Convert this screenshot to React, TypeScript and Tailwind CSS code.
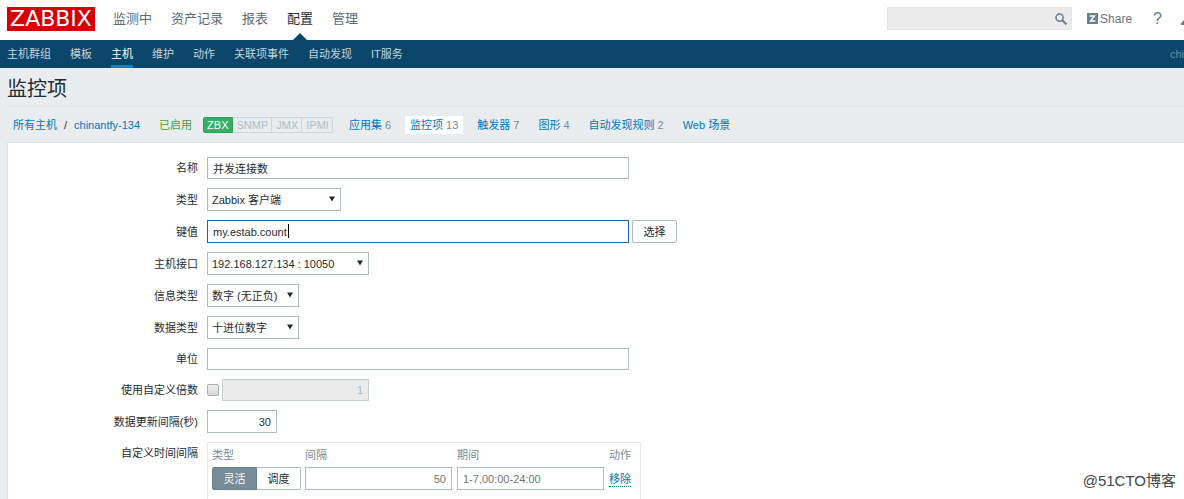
import type { ReactNode } from "react";

const TOP_MENU = ["监测中", "资产记录", "报表", "配置", "管理"];
const SUB_MENU = ["主机群组", "模板", "主机", "维护", "动作", "关联项事件", "自动发现", "IT服务"];
const INTERFACES = ["SNMP", "JMX", "IPMI"];
const HOST_TABS = [
  { name: "应用集", count: "6" },
  { name: "监控项", count: "13" },
  { name: "触发器", count: "7" },
  { name: "图形", count: "4" },
  { name: "自动发现规则", count: "2" },
  { name: "Web 场景", count: "" },
];

function SearchIcon() {
  return (
    <svg className="size-3" viewBox="0 0 12 12" fill="none" stroke="#66808d">
      <circle cx="4.6" cy="4.6" r="3.6" strokeWidth="1.5" />
      <path d="M7.2 7.2 11.4 11.4" strokeWidth="2" />
    </svg>
  );
}

function Header() {
  return (
    <header className="flex h-10 items-center overflow-hidden bg-white pl-[7px]">
      <a
        href="#"
        className="mt-[-2px] flex h-6 w-[88px] items-center justify-center bg-[#d40000] font-['DejaVu_Sans',sans-serif] text-[22px] leading-6 text-white"
      >
        ZABBIX
      </a>
      <nav className="ml-[18px] flex h-10 gap-[19px] text-[13px]">
        {TOP_MENU.map((item) => (
          <a
            key={item}
            href="#"
            className={
              item === "配置"
                ? "relative flex h-[38px] items-center text-[#1f2c33]"
                : "flex h-[38px] items-center text-[#5c6b73]"
            }
          >
            {item}
            {item === "配置" && (
              <svg className="absolute top-[33px] left-[6px] h-[7px] w-[14px]" viewBox="0 0 14 7">
                <path d="M0 7 7 0l7 7z" fill="#0a466a" />
              </svg>
            )}
          </a>
        ))}
      </nav>
      <div className="mt-[-3px] -mr-[9px] ml-auto flex shrink-0 items-center text-[#66757d]">
        <div className="flex h-[23px] w-[185px] items-center border border-[#e2e5e7] bg-[#ebebeb] pr-1">
          <input aria-label="Search" className="h-full min-w-0 flex-1 bg-transparent px-1 outline-none" />
          <button type="button" aria-label="Search">
            <SearchIcon />
          </button>
        </div>
        <a href="#" className="ml-[15px] flex items-center gap-[2px] text-[12px]">
          <svg className="size-[11px]" viewBox="0 0 11 11">
            <path d="M0 0h11v11H0z" fill="#66808d" />
            <path d="M2.6 3h4.8L3.6 8h4.8" fill="none" stroke="#fff" strokeWidth="1.5" />
          </svg>
          Share
        </a>
        <a href="#" className="ml-[21px] text-[16px] leading-5 text-[#5f7a88]">
          ?
        </a>
        <a href="#" aria-label="Profile" className="ml-[19px]">
          <svg className="size-3" viewBox="0 0 12 12" fill="#5f7a88">
            <circle cx="6" cy="3" r="3" />
            <path d="M0 12c0-3 2-5 6-5s6 2 6 5z" />
          </svg>
        </a>
      </div>
    </header>
  );
}

function SubMenu() {
  return (
    <nav className="flex h-7 items-center gap-[19px] bg-[#0a466a] pl-[7px] text-[#c6d3dc]">
      {SUB_MENU.map((item) => (
        <a
          key={item}
          href="#"
          className={
            item === "主机"
              ? "flex h-7 items-center border-b-3 border-[#0f83c9] pt-[3px] text-white"
              : "flex h-7 items-center"
          }
        >
          {item}
        </a>
      ))}
      <span className="ml-auto text-[#6b8ba0]">chi</span>
    </nav>
  );
}

function HostBar() {
  return (
    <div className="flex h-[35px] items-center pl-[6px] text-[#0275b8]">
      <a href="#">所有主机</a>
      <span className="mx-[7px] text-[#1f2c33]">/</span>
      <a href="#">chinantfy-134</a>
      <span className="ml-[19px] text-[#429e47]">已启用</span>
      <span className="ml-[11px] flex h-4 leading-[14px]">
        <span className="rounded-l-xs border border-[#2f9f5e] bg-[#34af67] px-[3px] text-white">ZBX</span>
        {INTERFACES.map((name) => (
          <span
            key={name}
            className="border border-l-0 border-[#ccd5d9] pr-[3px] pl-1 text-[#b0bec5] last:rounded-r-xs"
          >
            {name}
          </span>
        ))}
      </span>
      <div className="ml-[11px] flex gap-[9px]">
        {HOST_TABS.map((tab) => (
          <a
            key={tab.name}
            href="#"
            className={
              tab.name === "监控项"
                ? "flex h-[18px] items-center gap-[3px] bg-white px-[5px]"
                : "flex h-[18px] items-center gap-[3px] px-[5px]"
            }
          >
            {tab.name}
            {tab.count && <span className="text-[#768d99]">{tab.count}</span>}
          </a>
        ))}
      </div>
    </div>
  );
}

function Row({ label, htmlFor, children }: { label: string; htmlFor: string; children: ReactNode }) {
  return (
    <div className="flex items-center gap-[9px]">
      <label htmlFor={htmlFor} className="w-[190px] shrink-0 text-right">
        {label}
      </label>
      <div className="flex items-center gap-[3px]">{children}</div>
    </div>
  );
}

function Select({ id, value, width }: { id: string; value: string; width: string }) {
  return (
    <div className={`relative ${width}`}>
      <select id={id} className="h-[23px] w-full appearance-none border border-[#acbbc2] bg-white pl-1 outline-none">
        <option>{value}</option>
      </select>
      <svg className="pointer-events-none absolute top-2 right-[6px] h-[6px] w-[6px]" viewBox="0 0 7 6">
        <path d="M0 0h7L3.5 6z" fill="#1f2c33" />
      </svg>
    </div>
  );
}

function IntervalTable() {
  return (
    <div className="border border-b-0 border-[#e4e9eb] px-1 pt-1 pr-[9px]">
      <table className="text-[#768d99]">
        <thead>
          <tr className="h-[20px] text-left">
            <th className="pr-1 pb-1 font-normal">类型</th>
            <th className="pr-[5px] pb-1 font-normal">间隔</th>
            <th className="pr-[5px] pb-1 font-normal">期间</th>
            <th className="pb-1 font-normal">动作</th>
          </tr>
        </thead>
        <tbody>
          <tr>
            <td className="pr-1">
              <div className="flex h-[23px]">
                <button type="button" className="w-[45px] rounded-l-xs border border-[#6a818d] bg-[#768d99] text-white">
                  灵活
                </button>
                <button
                  type="button"
                  className="w-11 rounded-r-xs border border-l-0 border-[#acbbc2] bg-white text-[#1f2c33]"
                >
                  调度
                </button>
              </div>
            </td>
            <td className="pr-[5px]">
              <input
                aria-label="间隔"
                placeholder="50"
                className="block h-[23px] w-[147px] border border-[#acbbc2] px-[5px] text-right placeholder:text-[#757575]"
              />
            </td>
            <td className="pr-[5px]">
              <input
                aria-label="期间"
                placeholder="1-7,00:00-24:00"
                className="block h-[23px] w-[147px] border border-[#acbbc2] px-[5px] placeholder:text-[#757575]"
              />
            </td>
            <td>
              <button type="button" className="border-b border-dotted border-[#0275b8] leading-[14px] text-[#0275b8]">
                移除
              </button>
            </td>
          </tr>
        </tbody>
      </table>
    </div>
  );
}

export default function App() {
  return (
    <div className="relative flex min-h-screen flex-col overflow-hidden bg-[#e9edf0] font-['Liberation_Sans','Noto_Sans_CJK_SC',sans-serif] text-[11px] leading-4 text-[#1f2c33]">
      <Header />
      <SubMenu />
      <main className="flex flex-1 flex-col pl-[7px]">
        <h1 className="flex h-[39px] items-center border-b border-[#dfe4e7] pt-[3px] text-[20px] leading-6">监控项</h1>
        <HostBar />
        <form className="flex flex-1 flex-col gap-[9px] border-t border-l border-[#dfe4e7] bg-white pt-[14px]">
          <Row label="名称" htmlFor="name">
            <input id="name" defaultValue="并发连接数" className="h-[22px] w-[422px] border border-[#acbbc2] px-[5px]" />
          </Row>
          <Row label="类型" htmlFor="type">
            <Select id="type" value="Zabbix 客户端" width="w-[134px]" />
          </Row>
          <Row label="键值" htmlFor="key">
            <div className="relative">
              <input
                id="key"
                defaultValue="my.estab.count"
                className="block h-[23px] w-[422px] border border-[#0f6ea8] px-[5px] outline-none"
              />
              <span className="absolute top-1 left-[81px] h-[14px] w-px bg-black" />
            </div>
            <button type="button" className="h-[23px] w-[45px] rounded-xs border border-[#acbbc2] bg-white">
              选择
            </button>
          </Row>
          <Row label="主机接口" htmlFor="interface">
            <Select id="interface" value="192.168.127.134 : 10050" width="w-[162px]" />
          </Row>
          <Row label="信息类型" htmlFor="value-type">
            <Select id="value-type" value="数字 (无正负)" width="w-[92px]" />
          </Row>
          <Row label="数据类型" htmlFor="data-type">
            <Select id="data-type" value="十进位数字" width="w-[92px]" />
          </Row>
          <Row label="单位" htmlFor="units">
            <input id="units" className="h-[22px] w-[422px] border border-[#acbbc2] px-[5px]" />
          </Row>
          <Row label="使用自定义倍数" htmlFor="multiplier">
            <input
              id="multiplier"
              type="checkbox"
              className="size-3 appearance-none rounded-xs border border-[#aaaaaa] bg-linear-to-b from-[#eeeeee] to-[#d8d8d8]"
            />
            <input
              aria-label="倍数"
              disabled
              defaultValue="1"
              className="h-[22px] w-[147px] border border-[#c5d0d5] bg-[#ebebeb] px-[5px] text-right text-[#acbbc2]"
            />
          </Row>
          <Row label="数据更新间隔(秒)" htmlFor="delay">
            <input id="delay" defaultValue="30" className="h-[23px] w-[70px] border border-[#acbbc2] px-[5px] text-right" />
          </Row>
          <div className="flex flex-1 gap-[9px]">
            <span className="w-[190px] shrink-0 pt-[3px] text-right">自定义时间间隔</span>
            <IntervalTable />
          </div>
        </form>
      </main>
      <span className="absolute right-2 bottom-2 text-[15px] leading-5 text-[#444444]">@51CTO博客</span>
    </div>
  );
}
